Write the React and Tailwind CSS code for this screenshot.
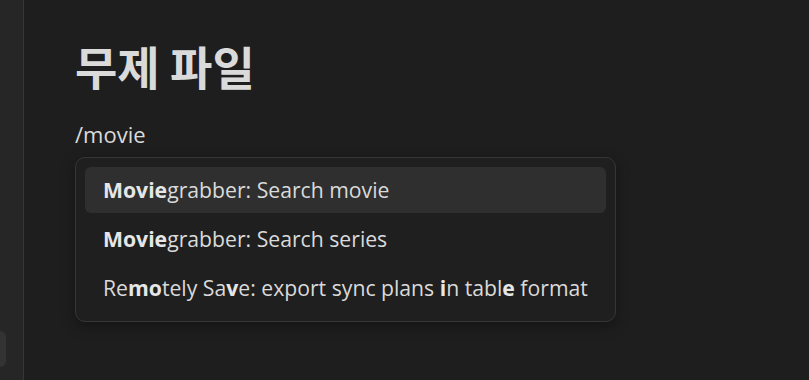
import React from "react";

const items = [
  [["Movie", true], ["grabber: Search movie", false]],
  [["Movie", true], ["grabber: Search series", false]],
  [
    ["Re", false],
    ["mo", true],
    ["tely Sa", false],
    ["v", true],
    ["e: export sync plans ", false],
    ["i", true],
    ["n tabl", false],
    ["e", true],
    [" format", false],
  ],
];

const App = () => {
  return (
    <div
      className="w-[809px] h-[380px] flex bg-[#1e1e1e] overflow-hidden"
      style={{ fontFamily: '"Open Sans", "Noto Sans CJK KR", sans-serif' }}
    >
      {/* Sidebar strip */}
      <div className="w-[24px] shrink-0 bg-[#262626] border-r border-[#363636] flex flex-col justify-end pb-[13px]">
        <div className="w-[6px] h-[36px] rounded-r-[6px] bg-[#333333]" />
      </div>

      {/* Editor */}
      <div className="flex-1 pl-[51px] pt-[32px]">
        <h1
          className="text-[46px] font-bold text-[#dadada] leading-[66px]"
          style={{ fontFamily: '"Noto Sans CJK KR", sans-serif' }}
        >
          무제 파일
        </h1>
        <p className="mt-[19px] text-[22px] text-[#dadada] leading-[34px]">/movie</p>

        {/* Suggestion popup */}
        <div className="mt-[6px] w-[541px] rounded-[10px] border border-[#363636] bg-[#1f1f1f] p-[9px] pb-[10px] shadow-[0_4px_14px_rgba(0,0,0,0.35)] flex flex-col gap-[3px]">
          {items.map((parts, i) => (
            <div
              key={i}
              className={`h-[46px] px-[18px] flex items-center rounded-[6px] text-[21.2px] text-[#dadada] whitespace-pre ${
                i === 0 ? "bg-[#2f2f2f]" : ""
              }`}
            >
              <span>
                {parts.map(([t, b], j) => (
                  <span key={j} className={b ? "font-bold text-[#e6e6e6]" : ""}>
                    {t}
                  </span>
                ))}
              </span>
            </div>
          ))}
        </div>
      </div>
    </div>
  );
};

export default App;
